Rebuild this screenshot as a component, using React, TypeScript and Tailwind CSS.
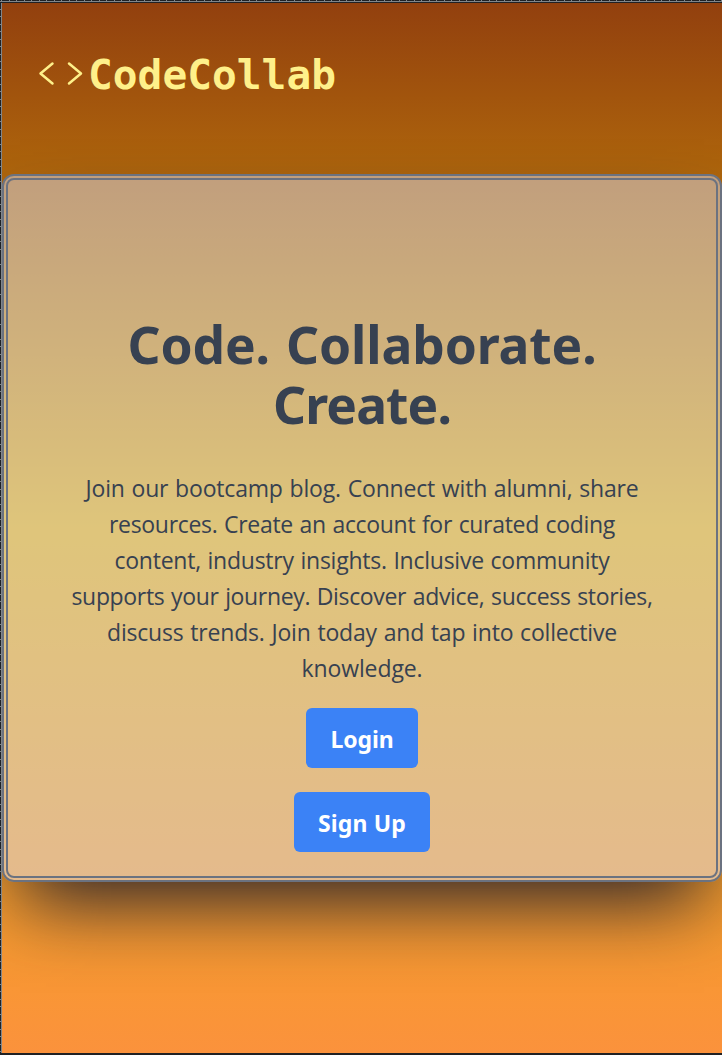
import React from "react";

const paragraph = [
  { text: "Join our bootcamp blog. Connect with alumni, share", width: 553 },
  { text: "resources. Create an account for curated coding", width: 506 },
  { text: "content, industry insights. Inclusive community", width: 495 },
  { text: "supports your journey. Discover advice, success stories,", width: 581 },
  { text: "discuss trends. Join today and tap into collective", width: 510 },
  { text: "knowledge.", width: 121 },
];

function Fitted({ text, width, className = "" }: { text: string; width: number; className?: string }) {
  const ref = React.useRef<HTMLSpanElement>(null);
  React.useLayoutEffect(() => {
    const el = ref.current;
    if (!el) return;
    el.style.letterSpacing = "0px";
    const natural = el.getBoundingClientRect().width;
    const gap = (width - natural) / text.length;
    el.style.letterSpacing = `${gap}px`;
  }, [text, width]);
  return (
    <span ref={ref} className={`inline-block whitespace-nowrap ${className}`}>
      {text}
    </span>
  );
}

export default function App() {
  return (
    <div className="flex h-[1055px] w-[722px] flex-col overflow-hidden bg-[#202124] font-['Noto_Sans','Open_Sans',sans-serif]">
      <div className="h-[2px] shrink-0 border-b border-[#80868b] bg-[repeating-linear-gradient(90deg,#202124_0_1.5px,#80868b_1.5px_2.5px,#202124_2.5px_7.5px)]" />
      <div className="h-px shrink-0 bg-[#202124]" />
      <div className="flex h-[1050px] shrink-0">
        <div className="w-[2px] shrink-0 border-r border-[#80868b] bg-[repeating-linear-gradient(180deg,#202124_0_6px,#80868b_6px_7px,#202124_7px_7.5px)]" />
        <main className="flex w-[720px] flex-col overflow-hidden bg-linear-to-b/srgb from-[#92400e] via-[#eab308] to-[#fb923c]">
          <header className="flex h-[171px] shrink-0 items-start pl-9 pt-[45px] text-[#fef08a]">
            <svg className="mt-[3px] h-[42px] w-[45px] shrink-0" viewBox="0 0 45 42" fill="none" stroke="currentColor" strokeWidth="2.5" strokeLinecap="round" strokeLinejoin="round">
              <path d="M14.5 12.5 2.5 22.5 14.5 32.5M31 12.5 43 22.5 31 32.5" />
            </svg>
            <div className="pl-[5px] font-['DejaVu_Sans_Mono',monospace] text-[41.2px] font-bold leading-[54px]">CodeCollab</div>
          </header>
          <section className="flex h-[708px] shrink-0 flex-col items-center rounded-[12px] border-6 border-double border-[#6b7280] bg-[#d3d7ed]/50 bg-clip-border text-[#374151] shadow-[0_37.5px_75px_-18px_#241f2c]">
            <h1 className="mt-[134px] flex flex-col items-center text-[51.5px] font-bold leading-[60px]">
              <Fitted text="Code. Collaborate." width={469} className="[word-spacing:3px]" />
              <Fitted text="Create." width={178} />
            </h1>
            <p className="mt-[36px] flex flex-col items-center font-['Open_Sans',sans-serif] text-[23px] leading-9 [word-spacing:1px]">
              {paragraph.map((line) => (
                <Fitted key={line.text} text={line.text} width={line.width} />
              ))}
            </p>
            <button className="mt-[22px] h-[60px] w-[112px] shrink-0 rounded-md bg-[#3b82f6] pt-[2px] text-[23px] font-bold text-white">
              <Fitted text="Login" width={63} />
            </button>
            <button className="mt-6 h-[60px] w-[136px] shrink-0 rounded-md bg-[#3b82f6] pt-[2px] text-[23px] font-bold text-white">
              <Fitted text="Sign Up" width={88} />
            </button>
          </section>
        </main>
      </div>
    </div>
  );
}
